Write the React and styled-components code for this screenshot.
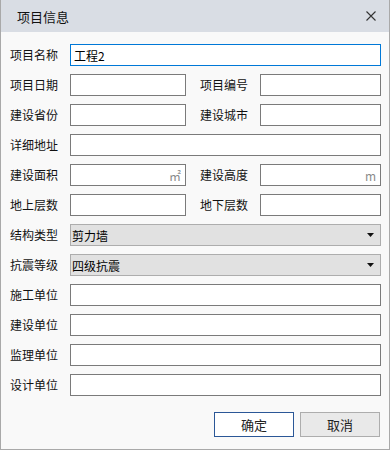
import React from "react";
import styled, { createGlobalStyle } from "styled-components";

const Global = createGlobalStyle`
  html, body { margin: 0; padding: 0; background: #f9f9f9; }
  * { box-sizing: border-box; }
  body { font-family: "Noto Sans CJK SC", "Noto Sans", sans-serif; }
`;

const Window = styled.div`
  width: 390px;
  height: 450px;
  border: 1px solid #a9a9a9;
  border-top: none;
  background: #f9f9f9;
  display: flex;
  flex-direction: column;
`;

const TitleBar = styled.div`
  height: 32px;
  background: #d9dde4;
  display: flex;
  align-items: center;
  justify-content: space-between;
  padding: 0 12px 0 16px;
  font-size: 13px;
  color: #111;
`;

const CloseBtn = styled.div`
  width: 12px;
  height: 12px;
  display: flex;
  align-items: center;
  justify-content: center;
`;

const Body = styled.div`
  padding: 12px 8px 12px 9px;
  display: flex;
  flex-direction: column;
`;

const Form = styled.div`
  display: grid;
  grid-template-columns: 60px 116px 14px 60px 121px;
  grid-auto-rows: 22px;
  row-gap: 8px;
  align-items: center;
`;

const Label = styled.div`
  font-size: 12px;
  color: #111;
  white-space: nowrap;
  line-height: 22px;
  grid-column: ${(p) => p.$col || "auto"};
`;

const Field = styled.div`
  height: 22px;
  border: 1px solid ${(p) => (p.$focus ? "#0078d7" : "#7a7a7a")};
  background: #fff;
  font-size: 12px;
  color: #000;
  display: flex;
  align-items: center;
  justify-content: space-between;
  padding: 0 4px 0 3px;
  grid-column: ${(p) => p.$span || "auto"};
`;

const Unit = styled.span`
  margin-left: auto;
  color: #8a8a8a;
  font-size: 12px;
`;

const Select = styled.div`
  height: 22px;
  border: 1px solid #adadad;
  background: #e1e1e1;
  font-size: 12px;
  color: #000;
  display: flex;
  align-items: center;
  justify-content: space-between;
  padding: 0 6px 0 1px;
  grid-column: 2 / 6;
`;

const Footer = styled.div`
  display: flex;
  justify-content: flex-end;
  gap: 6px;
  margin-top: 16px;
  padding-right: 1px;
`;

const Button = styled.div`
  width: 80px;
  height: 25px;
  display: flex;
  align-items: center;
  justify-content: center;
  font-size: 13px;
  color: #222;
  background: ${(p) => (p.$primary ? "#ffffff" : "#e9e9e9")};
  border: 1px solid ${(p) => (p.$primary ? "#2b5797" : "#adadad")};
`;

const Arrow = () => (
  <svg width="7" height="4" viewBox="0 0 7 4">
    <path d="M0 0 H7 L3.5 4 Z" fill="#111" />
  </svg>
);

export default function App() {
  return (
    <>
      <Global />
      <Window>
        <TitleBar>
          <span>项目信息</span>
          <CloseBtn>
            <svg width="10" height="10" viewBox="0 0 10 10">
              <path d="M0.5 0.5 L9.5 9.5 M9.5 0.5 L0.5 9.5" stroke="#333" strokeWidth="1.1" />
            </svg>
          </CloseBtn>
        </TitleBar>
        <Body>
          <Form>
            <Label>项目名称</Label>
            <Field $focus $span="2 / 6">工程2</Field>

            <Label>项目日期</Label>
            <Field />
            <Label $col="4">项目编号</Label>
            <Field />

            <Label>建设省份</Label>
            <Field />
            <Label $col="4">建设城市</Label>
            <Field />

            <Label>详细地址</Label>
            <Field $span="2 / 6" />

            <Label>建设面积</Label>
            <Field><Unit>㎡</Unit></Field>
            <Label $col="4">建设高度</Label>
            <Field><Unit>m</Unit></Field>

            <Label>地上层数</Label>
            <Field />
            <Label $col="4">地下层数</Label>
            <Field />

            <Label>结构类型</Label>
            <Select><span>剪力墙</span><Arrow /></Select>

            <Label>抗震等级</Label>
            <Select><span>四级抗震</span><Arrow /></Select>

            <Label>施工单位</Label>
            <Field $span="2 / 6" />
            <Label>建设单位</Label>
            <Field $span="2 / 6" />
            <Label>监理单位</Label>
            <Field $span="2 / 6" />
            <Label>设计单位</Label>
            <Field $span="2 / 6" />
          </Form>
          <Footer>
            <Button $primary>确定</Button>
            <Button>取消</Button>
          </Footer>
        </Body>
      </Window>
    </>
  );
}
